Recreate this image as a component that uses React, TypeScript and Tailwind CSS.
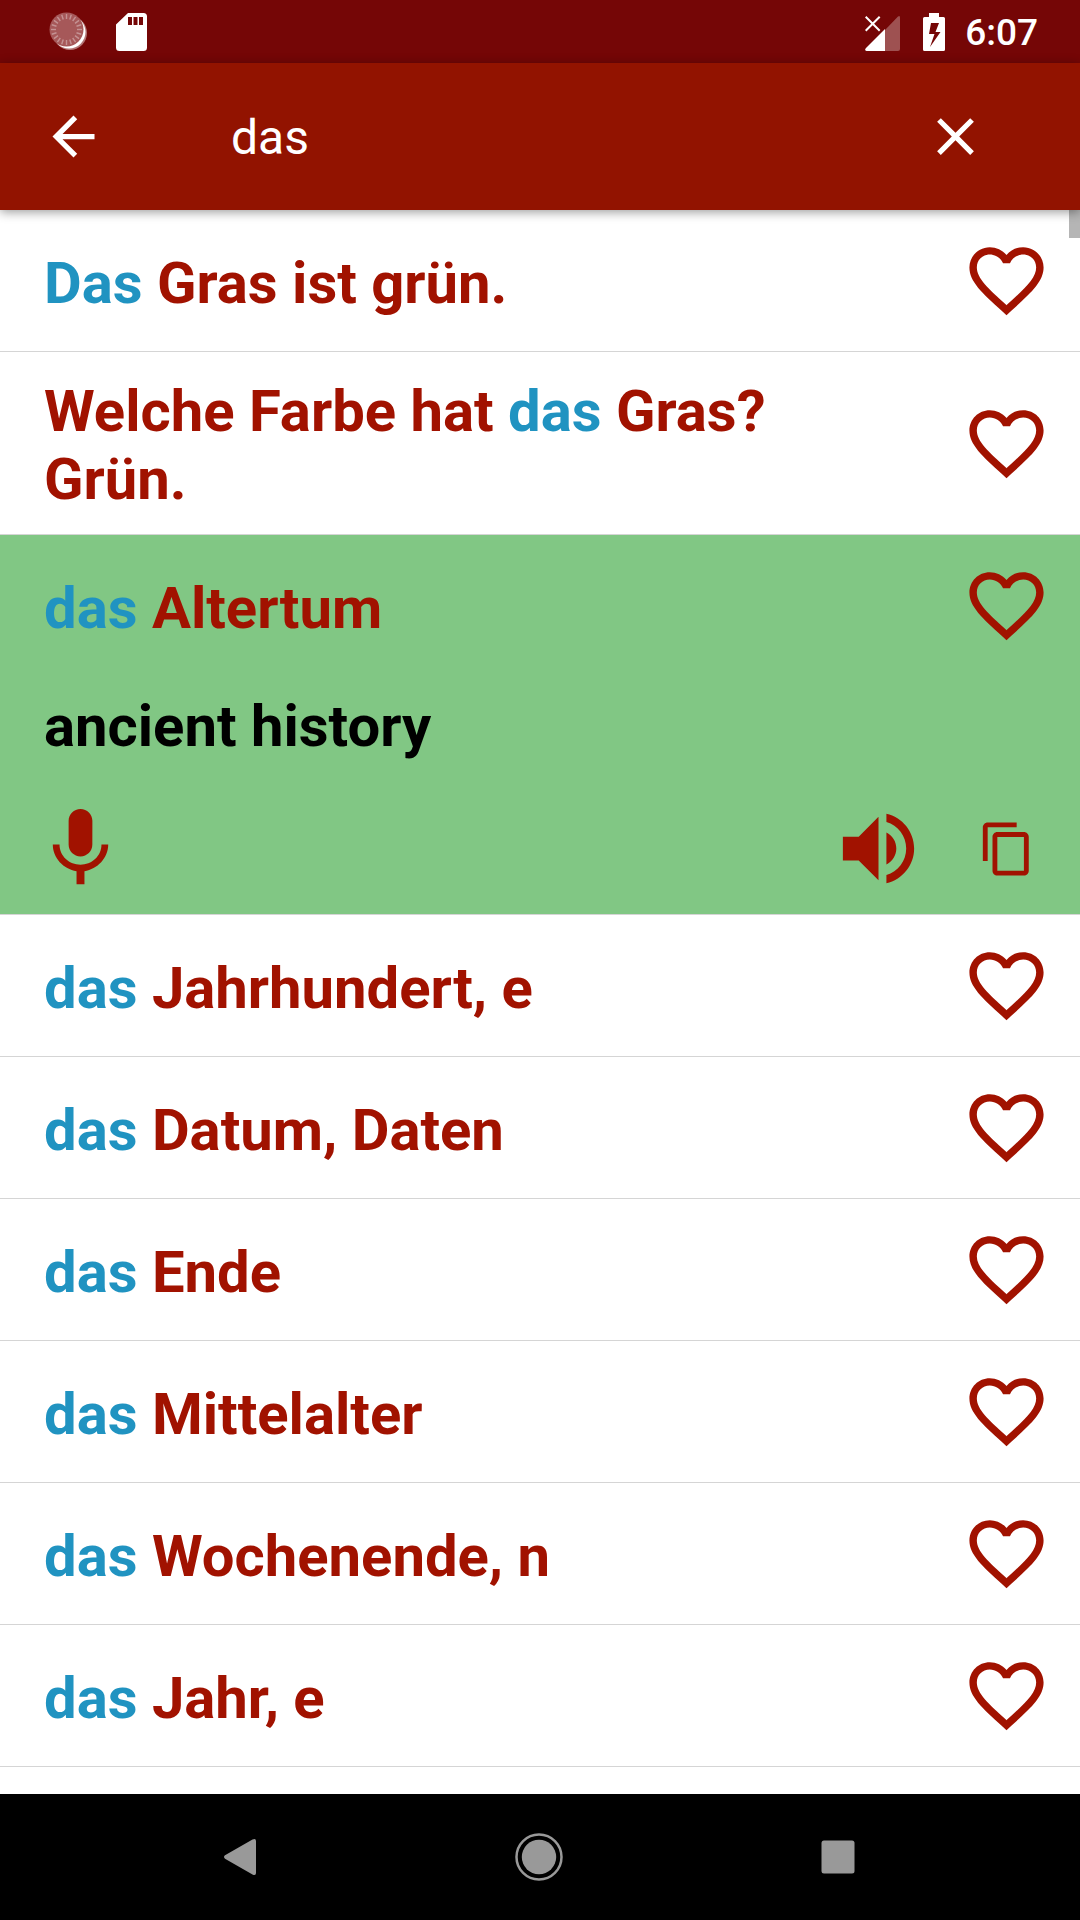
// src/App.tsx
import { useState } from 'react';

interface Phrase {
  id: number;
  german: string;
  english?: string;
}

const phrases: Phrase[] = [
  { id: 1, german: 'Das Gras ist grün.' },
  { id: 2, german: 'Welche Farbe hat das Gras? Grün.' },
  { id: 3, german: 'das Altertum', english: 'ancient history' },
  { id: 4, german: 'das Jahrhundert, e' },
  { id: 5, german: 'das Datum, Daten' },
  { id: 6, german: 'das Ende' },
  { id: 7, german: 'das Mittelalter' },
  { id: 8, german: 'das Wochenende, n' },
  { id: 9, german: 'das Jahr, e' },
];

const icons = {
  back: 'M20 11H7.83l5.59-5.59L12 4l-8 8 8 8 1.41-1.41L7.83 13H20v-2z',
  close:
    'M19 6.41L17.59 5 12 10.59 6.41 5 5 6.41 10.59 12 5 17.59 6.41 19 12 13.41 17.59 19 19 17.59 13.41 12z',
  heart:
    'M16.5 3c-1.74 0-3.41.81-4.5 2.09C10.91 3.81 9.24 3 7.5 3 4.42 3 2 5.42 2 8.5c0 3.78 3.4 6.86 8.55 11.54L12 21.35l1.45-1.32C18.6 15.36 22 12.28 22 8.5 22 5.42 19.58 3 16.5 3zm-4.4 15.55l-.1.1-.1-.1C7.14 14.24 4 11.39 4 8.5 4 6.5 5.5 5 7.5 5c1.54 0 3.04.99 3.57 2.36h1.87C13.46 5.99 14.96 5 16.5 5c2 0 3.5 1.5 3.5 3.5 0 2.89-3.14 5.74-7.9 10.05z',
  mic: 'M12 14c1.66 0 2.99-1.34 2.99-3L15 5c0-1.66-1.34-3-3-3S9 3.34 9 5v6c0 1.66 1.34 3 3 3zm5.3-3c0 3-2.54 5.1-5.3 5.1S6.7 14 6.7 11H5c0 3.41 2.72 6.23 6 6.72V21h2v-3.28c3.28-.48 6-3.3 6-6.72h-1.7z',
  volume:
    'M3 9v6h4l5 5V4L7 9H3zm13.5 3c0-1.77-1.02-3.29-2.5-4.03v8.05c1.48-.73 2.5-2.25 2.5-4.02zM14 3.23v2.06c2.89.86 5 3.54 5 6.71s-2.11 5.85-5 6.71v2.06c4.01-.91 7-4.49 7-8.77s-2.99-7.86-7-8.77z',
  copy: 'M16 1H4c-1.1 0-2 .9-2 2v14h2V3h12V1zm3 4H8c-1.1 0-2 .9-2 2v14c0 1.1.9 2 2 2h11c1.1 0 2-.9 2-2V7c0-1.1-.9-2-2-2zm0 16H8V7h11v14z',
};

function Icon({ name, className }: { name: keyof typeof icons; className: string }) {
  return (
    <svg viewBox="0 0 24 24" fill="currentColor" className={className} aria-hidden="true">
      <path d={icons[name]} />
    </svg>
  );
}

function StatusBar() {
  const ticks = Array.from({ length: 20 }, (_, i) => i * 18);

  return (
    <div className="flex h-[63px] shrink-0 items-center justify-between bg-[#750606] pr-[42px] pl-[49px] text-white">
      <div className="flex items-center gap-7">
        {/* Sync spinner */}
        <svg viewBox="0 0 39 39" className="size-[39px]" aria-hidden="true">
          <circle cx="21" cy="21" r="17" fill="#fff" fillOpacity=".45" />
          <circle cx="20" cy="20" r="16.5" fill="#fff" />
          <circle cx="17.5" cy="17.5" r="17" fill="#a65859" />
          <g stroke="#c49293" strokeWidth="1.4">
            {ticks.map((angle) => (
              <line key={angle} x1="17.5" y1="2" x2="17.5" y2="7" transform={`rotate(${angle} 17.5 17.5)`} />
            ))}
          </g>
        </svg>
        {/* SD card */}
        <svg viewBox="0 0 31 38" className="h-[38px] w-[31px]" aria-hidden="true">
          <path
            fill="currentColor"
            fillRule="evenodd"
            d="M12 0h15.500a3.500 3.500 0 0 1 3.500 3.500v31a3.500 3.500 0 0 1-3.500 3.500h-24a3.500 3.500 0 0 1-3.500-3.500v-23zM12 4v8h4V4zM17.500 4v8h4V4zM23 4v8h4V4z"
          />
        </svg>
      </div>
      <div className="flex items-center">
        {/* No mobile data */}
        <svg viewBox="0 0 35 38" className="h-[38px] w-[35px]" aria-hidden="true">
          <path fill="#fff" fillOpacity=".3" d="M20 17 33 3.500q2-1.500 2 1V36q0 2-2 2H20z" />
          <path fill="currentColor" d="M20 16v22H1.500q-2.500-.5-.5-3z" />
          <path stroke="currentColor" strokeWidth="2" d="m.7 3.700 14 14m0-14-14 14" />
        </svg>
        {/* Battery charging */}
        <svg viewBox="0 0 22 38" className="ml-[23px] h-[38px] w-[22px]" aria-hidden="true">
          <path
            fill="currentColor"
            fillRule="evenodd"
            d="M6 0h10v4h4.500q1.500 0 1.500 1.500v31q0 1.500-1.500 1.500h-19q-1.500 0-1.500-1.500v-31Q0 4 1.500 4H6zM8 10 6 21h5.500L7 34 17.500 19h-5L16 10z"
          />
        </svg>
        <time className="ml-5 pt-[3px] text-[37px] leading-[44px] font-medium">6:07</time>
      </div>
    </div>
  );
}

// Colours every occurrence of the search term
function Highlighted({ text, term }: { text: string; term: string }) {
  const parts = term ? text.split(new RegExp(`(${term})`, 'i')) : [text];

  return (
    <>
      {parts.map((part, index) =>
        part.toLowerCase() === term.toLowerCase() ? (
          <span key={index} className="text-[#2093c1]">
            {part}
          </span>
        ) : (
          part
        )
      )}
    </>
  );
}

interface PhraseRowProps {
  phrase: Phrase;
  term: string;
  open: boolean;
  onToggle: () => void;
}

function PhraseRow({ phrase, term, open, onToggle }: PhraseRowProps) {
  return (
    <li className={open ? 'border-b border-[#d5d5d5] bg-[#81c784]' : 'border-b border-[#d5d5d5] bg-white'}>
      <div className="flex items-center justify-between pr-[29px] pl-11">
        <button
          onClick={onToggle}
          className="max-w-[800px] flex-1 pt-[25px] pb-[21px] text-left text-[58px] leading-[68px] font-bold"
        >
          <Highlighted text={phrase.german} term={term} />
        </button>
        <button aria-label="Add to favorites" className="py-[26px]">
          <Icon name="heart" className="size-[89px]" />
        </button>
      </div>

      {open && phrase.english && (
        <>
          <p className="px-11 pt-4 text-[58px] leading-[68px] font-bold text-black">{phrase.english}</p>
          <div className="flex items-center pt-[41px] pr-11 pb-[18px] pl-[33px]">
            <button aria-label="Record">
              <Icon name="mic" className="size-[95px]" />
            </button>
            <button aria-label="Listen" className="ml-auto">
              <Icon name="volume" className="size-[95px]" />
            </button>
            <button aria-label="Copy" className="ml-[52px]">
              <Icon name="copy" className="size-[58px]" />
            </button>
          </div>
        </>
      )}
    </li>
  );
}

function NavigationBar() {
  return (
    <nav className="grid h-[126px] shrink-0 grid-cols-3 place-items-center bg-black pr-[93px] pl-[91px] text-[#999999]">
      <button aria-label="Back">
        <svg viewBox="0 0 48 48" className="size-12" fill="currentColor" aria-hidden="true">
          <path d="M9 22.300 36.500 6.500q3.500-1.500 3.500 1.500v32q0 3-3.500 1.500L9 25.700q-2-1.700 0-3.400z" />
        </svg>
      </button>
      <button aria-label="Home">
        <svg viewBox="0 0 48 48" className="size-12" aria-hidden="true">
          <circle cx="24" cy="24" r="22.500" fill="none" stroke="currentColor" strokeWidth="2.500" />
          <circle cx="24" cy="24" r="17.200" fill="currentColor" />
        </svg>
      </button>
      <button aria-label="Recent apps">
        <svg viewBox="0 0 48 48" className="size-12" fill="currentColor" aria-hidden="true">
          <rect x="7.500" y="7.500" width="33" height="33" rx="2.500" />
        </svg>
      </button>
    </nav>
  );
}

export default function App() {
  const [query, setQuery] = useState('das');
  const [openId, setOpenId] = useState<number | null>(3);

  const results = phrases.filter((phrase) => phrase.german.toLowerCase().includes(query.toLowerCase()));

  return (
    <div className="flex h-screen flex-col bg-white font-[Roboto,sans-serif]">
      <StatusBar />

      <header className="relative z-10 flex h-[147px] shrink-0 items-center bg-[#921300] pr-[93px] pl-[42px] text-white shadow-[0_2px_10px_rgba(0,0,0,0.4)]">
        <button aria-label="Back">
          <Icon name="back" className="size-[63px]" />
        </button>
        <input
          type="text"
          aria-label="Search"
          value={query}
          onChange={(e) => setQuery(e.target.value)}
          className="ml-[126px] min-w-0 flex-1 pt-[2px] text-[48px] leading-[56px] outline-none"
        />
        <button aria-label="Clear search" onClick={() => setQuery('')}>
          <Icon name="close" className="size-[63px]" />
        </button>
      </header>

      <main className="relative min-h-0 flex-1 overflow-hidden">
        <ul className="text-[#a11200]">
          {results.map((phrase) => (
            <PhraseRow
              key={phrase.id}
              phrase={phrase}
              term={query}
              open={phrase.id === openId}
              onToggle={() => setOpenId(phrase.id === openId ? null : phrase.id)}
            />
          ))}
        </ul>
        {/* Scroll thumb */}
        <div className="absolute top-0 right-0 h-7 w-[11px] bg-[#b5b5b5]" />
      </main>

      <NavigationBar />
    </div>
  );
}
